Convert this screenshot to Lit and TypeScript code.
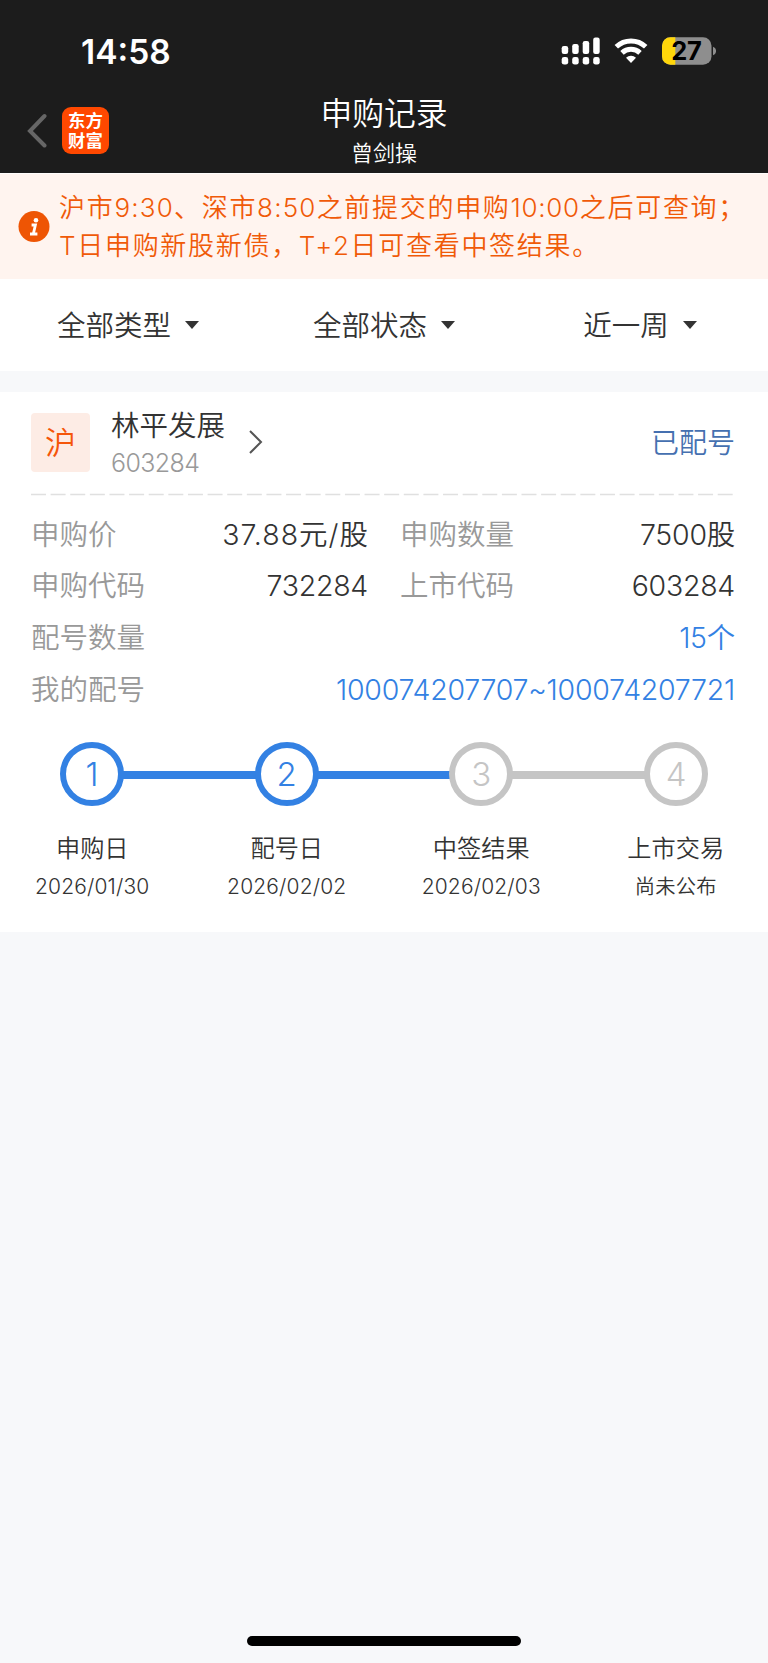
import { LitElement, html, css, svg, nothing } from "lit";
import { customElement, property } from "lit/decorators.js";
import { classMap } from "lit/directives/class-map.js";

@customElement("status-bar")
class StatusBar extends LitElement {
  static styles = css`
    :host { display: flex; height: 98px; box-sizing: border-box; padding: 33px 52px 0 81px; align-items: flex-start; }
    .time { font-size: 33.5px; line-height: 29px; font-weight: 600; color: #fff; flex: 1; margin-top: 5px; }
    svg { display: block; flex: none; }
    .pct { font: 700 25.5px Inter, sans-serif; letter-spacing: -0.4px; }
  `;
  render() {
    const tops = [9, 7, 4, 0.5];
    return html`
      <span class="time">14:58</span>
      <svg width="155" height="36" viewBox="0 -4 155 36">
        ${tops.map((t, i) => svg`
          <rect x=${0.7 + i * 10.5} y=${t} width="6.5" height=${17 - t} rx="2.2" fill="#fff"/>
          <rect x=${0.7 + i * 10.5} y="20" width="6.5" height="7.6" rx="2.4" fill="#fff"/>`)}
        <g fill="none" stroke="#fff" stroke-width="5">
          <path d="M55.3 9.8 A21.5 21.5 0 0 1 84.7 9.8"/>
          <path d="M61 15.8 A13.2 13.2 0 0 1 79 15.8"/>
        </g>
        <path d="M65 20.8 A7.3 7.3 0 0 1 75 20.8 L70 26Z" fill="#fff"/>
        <rect x="101" y="0.3" width="49.5" height="27.4" rx="8.5" fill="#8e8e8e"/>
        <path d="M114.3 0.3 H109.5 A8.5 8.5 0 0 0 101 8.8 V19.2 A8.5 8.5 0 0 0 109.5 27.7 H114.3Z" fill="#ffd60a"/>
        <path d="M152 9.8 A4.4 4.4 0 0 1 152 18.2Z" fill="#8e8e8e"/>
        <text class="pct" x="125.3" y="23.2" text-anchor="middle" fill="#000">27</text>
      </svg>`;
  }
}

@customElement("nav-header")
class NavHeader extends LitElement {
  static styles = css`
    :host { display: grid; grid-template-columns: 1fr auto 1fr; height: 75px; }
    .left { display: flex; align-items: flex-start; padding: 9px 0 0 27px; gap: 15px; }
    .back { margin-top: 6px; }
    .logo { width: 47px; height: 47px; border-radius: 9px; background: #ff4800; color: #fff; box-sizing: border-box; padding-top: 3px;
      display: flex; flex-direction: column; align-items: center; font: 700 17.4px/20px "Noto Sans CJK SC", sans-serif; }
    .mid { text-align: center; color: #fff; }
    .title { font-size: 31.8px; line-height: 32px; font-weight: 350; }
    .sub { font-size: 22px; line-height: 24px; margin-top: 11px; font-weight: 350; }
  `;
  render() {
    return html`
      <div class="left">
        <svg class="back" width="20" height="36" viewBox="0 0 20 36"><path d="M17.5 3 L3 18 L17.5 32.5" fill="none" stroke="#666" stroke-width="4" stroke-linecap="round"/></svg>
        <div class="logo"><span>东方</span><span>财富</span></div>
      </div>
      <div class="mid"><div class="title">申购记录</div><div class="sub">曾剑操</div></div>`;
  }
}

@customElement("notice-bar")
class NoticeBar extends LitElement {
  static styles = css`
    :host { display: flex; height: 106px; box-sizing: border-box; background: #fff4ef; color: #f05a08; border-top: 1px solid #fffdfc; padding: 15px 0 0 18px; gap: 9px; }
    .icon { margin-top: 22px; flex: none; }
    .text { font-size: 26px; line-height: 38px; font-weight: 350; letter-spacing: 1.7px; white-space: nowrap; }
    .num { letter-spacing: 1.2px; }
    .tight { letter-spacing: 0.7px; }
  `;
  render() {
    return html`
      <svg class="icon" width="32" height="32" viewBox="0 0 32 32">
        <circle cx="16" cy="15.6" r="15.5" fill="#ee5504"/>
        <circle cx="18" cy="9.2" r="2.3" fill="#fff"/>
        <path d="M13.6 14 H17.4 L15.4 22.6 M12 23 H19.4" fill="none" stroke="#fff" stroke-width="2.8"/>
      </svg>
      <div class="text">沪市<span class="num">9:30</span>、深市<span class="num">8:50</span>之前提交的申购<span class="tight">10:00</span>之后可查询；<br>T日申购新股新债，T+2日可查看中签结果。</div>`;
  }
}

@customElement("filter-bar")
class FilterBar extends LitElement {
  static styles = css`
    :host { display: grid; grid-template-columns: repeat(3, 1fr); height: 92px; background: #fff; }
    .item { display: flex; align-items: center; justify-content: center; gap: 14px; font-size: 28.5px; font-weight: 350; color: #333; }
    span { line-height: 32px; padding-top: 2px; }
    svg { display: block; }
  `;
  render() {
    return html`${["全部类型", "全部状态", "近一周"].map((t) => html`
      <div class="item"><span>${t}</span><svg width="14" height="8" viewBox="0 0 14 8"><path d="M0 0H14L7 8Z" fill="#333"/></svg></div>`)}`;
  }
}

interface Step { name: string; date: string; done: boolean; }

@customElement("step-track")
class StepTrack extends LitElement {
  @property({ attribute: false }) steps: Step[] = [];
  static styles = css`
    :host { display: flex; flex-direction: column; }
    .track { display: flex; align-items: center; padding: 0 60px; }
    .dot { width: 64px; height: 64px; box-sizing: border-box; border: 6px solid #c5c5c5; border-radius: 50%; color: #c5c5c5; font-size: 33px; line-height: 52px; font-weight: 300; text-align: center; flex: none; }
    .bar { flex: 1; height: 8px; margin: 2px -1px 0; background: #c5c5c5; }
    .dot.on { border-color: #3381e3; color: #3381e3; }
    .bar.on { background: #3381e3; }
    .labels { display: grid; grid-template-columns: repeat(4, 194.5px); margin-left: -5px; text-align: center; color: #333; }
    .name { font-size: 24.2px; line-height: 30px; margin-top: 28px; font-weight: 350; }
    .date { font-size: 21px; line-height: 26px; margin-top: 10px; font-weight: 350; letter-spacing: 0.16px; }
    .date.cn { font-size: 20.3px; }
  `;
  render() {
    return html`
      <div class="track">${this.steps.map((s, i) => html`
        ${i ? html`<div class=${classMap({ bar: true, on: this.steps[i - 1].done })}></div>` : nothing}
        <div class=${classMap({ dot: true, on: s.done })}>${i + 1}</div>`)}
      </div>
      <div class="labels">${this.steps.map((s) => html`
        <div><div class="name">${s.name}</div><div class=${classMap({ date: true, cn: !/\d/.test(s.date) })}>${s.date}</div></div>`)}
      </div>`;
  }
}

@customElement("record-card")
class RecordCard extends LitElement {
  static styles = css`
    :host { display: block; height: 540px; background: #fff; font-weight: 350; }
    .head { display: flex; height: 101px; padding: 0 33px 0 31px; }
    .badge { width: 59px; height: 59px; margin-top: 21px; border-radius: 4px; background: #fdece5; color: #f5560a; font-size: 31px; line-height: 59px; text-align: center; }
    .names { margin: 18px 0 0 21px; }
    .stock { font-size: 28.5px; line-height: 32px; color: #333; }
    .code { font-size: 25px; line-height: 30px; margin-top: 6px; color: #999; letter-spacing: -0.6px; font-weight: 300; }
    .arrow { margin: 37px auto 0 24px; }
    .status { font-size: 28px; line-height: 32px; margin-top: 35px; color: #4570b0; }
    .rule { display: block; margin-left: 31px; }
    .grid { display: grid; grid-template-columns: 337px 335px; column-gap: 32px; grid-auto-rows: 51.6px; margin: 13px 0 0 31px; align-items: center; font-size: 28.5px; }
    .cell { display: flex; justify-content: space-between; line-height: 32px; white-space: nowrap; }
    .wide { grid-column: 1 / 3; }
    .k { color: #999; }
    .v { color: #333; letter-spacing: -0.25px; }
    .price { letter-spacing: 1px; margin-right: -1px; }
    .wide .v { color: #3381e3; }
    step-track { margin-top: 27px; }
  `;
  render() {
    const cell = (k: string, v: string, wide = false) =>
      html`<div class=${classMap({ cell: true, wide })}><span class="k">${k}</span><span class=${classMap({ v: true, price: v.includes("/") })}>${v}</span></div>`;
    const steps: Step[] = [
      { name: "申购日", date: "2026/01/30", done: true },
      { name: "配号日", date: "2026/02/02", done: true },
      { name: "中签结果", date: "2026/02/03", done: false },
      { name: "上市交易", date: "尚未公布", done: false },
    ];
    return html`
      <div class="head">
        <div class="badge">沪</div>
        <div class="names"><div class="stock">林平发展</div><div class="code">603284</div></div>
        <svg class="arrow" width="14" height="26" viewBox="0 0 14 26"><path d="M1 2 L12 13 L1 24" fill="none" stroke="#555" stroke-width="2"/></svg>
        <div class="status">已配号</div>
      </div>
      <svg class="rule" width="704" height="3"><line x1="0" y1="1.5" x2="702" y2="1.5" stroke="#e0e0e0" stroke-width="1.4" stroke-dasharray="15 4.62"/></svg>
      <div class="grid">
        ${cell("申购价", "37.88元/股")}${cell("申购数量", "7500股")}
        ${cell("申购代码", "732284")}${cell("上市代码", "603284")}
        ${cell("配号数量", "15个", true)}${cell("我的配号", "100074207707~100074207721", true)}
      </div>
      <step-track .steps=${steps}></step-track>`;
  }
}

@customElement("app-root")
class AppRoot extends LitElement {
  static styles = css`
    :host { display: flex; flex-direction: column; width: 768px; height: 1663px; overflow: hidden; background: #f7f8fa; font-family: Inter, "Noto Sans CJK SC", sans-serif; }
    .top { background: #1c1c1c; height: 173px; }
    .gap { height: 21px; flex: none; }
    .home { width: 274px; height: 10px; border-radius: 5px; background: #000; margin: auto auto 17px 247px; }
  `;
  render() {
    return html`
      <div class="top"><status-bar></status-bar><nav-header></nav-header></div>
      <notice-bar></notice-bar>
      <filter-bar></filter-bar>
      <div class="gap"></div>
      <record-card></record-card>
      <div class="home"></div>`;
  }
}
